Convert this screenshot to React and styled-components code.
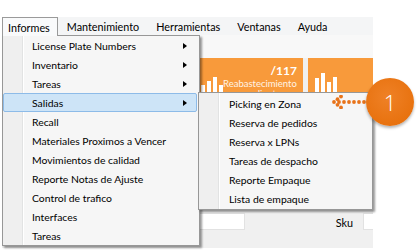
import React from "react";
import styled, { createGlobalStyle } from "styled-components";

const GlobalStyle = createGlobalStyle`
  html, body { margin: 0; padding: 0; background: #ffffff; }
  body { font-family: Lato, "Liberation Sans", Arial, sans-serif; }
  * { box-sizing: border-box; }
`;

const Page = styled.div`
  position: relative;
  width: 418px;
  height: 251px;
  padding: 17px 0 0 2px;
  overflow: hidden;
`;

const Window = styled.div`
  width: 371px;
  height: 231px;
  background: #f0f0f0;
  display: flex;
  flex-direction: column;
  overflow: hidden;
`;

const MenuBar = styled.div`
  height: 18px;
  display: flex;
  align-items: stretch;
  gap: 3px;
  background: #f4f5f6;
  font-size: 10.8px;
  color: #000;
`;

const MenuTitle = styled.div`
  display: flex;
  align-items: center;
  padding: 0 7px 0 5px;
  border: 1px solid ${(p) => (p.$active ? "#9a9a9a" : "transparent")};
  border-bottom: none;
  background: ${(p) => (p.$active ? "#f9fafb" : "transparent")};
  position: relative;
  z-index: 3;
  height: ${(p) => (p.$active ? "19px" : "18px")};
`;

const Toolbar = styled.div`
  height: 23px;
  background: #f8f8f8;
`;

const TileRow = styled.div`
  height: 34px;
  display: flex;
  gap: 5px;
  padding-left: 78px;
  overflow: hidden;
`;

const Tile = styled.div`
  flex: 0 0 109px;
  height: 34px;
  background: #f89a3b;
  display: flex;
  align-items: flex-end;
  justify-content: space-between;
  padding: 0 7px;
  color: #fff;
  overflow: hidden;
`;

const Bars = styled.div`
  display: flex;
  align-items: flex-end;
  gap: 2px;
  height: 100%;
`;

const Bar = styled.div`
  width: 4px;
  background: #ffffff;
`;

const TileText = styled.div`
  align-self: flex-start;
  display: flex;
  flex-direction: column;
  align-items: flex-end;
  padding-top: 7px;
  line-height: 10px;
`;

const TileValue = styled.div`
  font-size: 12px;
  font-weight: 700;
  line-height: 12px;
`;

const TileLabel = styled.div`
  font-size: 9.5px;
  line-height: 10px;
  color: #fff3e6;
  text-align: center;
  margin-top: 2px;
`;

const Content = styled.div`
  flex: 1;
  background: #f9f9f9;
`;

const FilterRow = styled.div`
  height: 38px;
  display: flex;
  align-items: flex-start;
  padding: 3px 0 0 100px;
  background: #f0f0f0;
`;

const Input = styled.div`
  flex: 0 0 ${(p) => p.$w}px;
  height: 17px;
  margin-right: ${(p) => p.$overflow || 0}px;
  background: #fff;
  border: 1px solid #e2e2e2;
`;

const Label = styled.div`
  flex: 1;
  text-align: right;
  padding: 3px 10px 0 0;
  font-size: 10.8px;
  color: #000;
`;

const Menu = styled.div`
  position: absolute;
  left: ${(p) => p.$x}px;
  top: ${(p) => p.$y}px;
  width: ${(p) => p.$w}px;
  padding: ${(p) => p.$pad}px 0;
  border: 1px solid #979797;
  background: linear-gradient(
    to right,
    #efefef 0 19px,
    #e2e3e3 19px 20px,
    #ffffff 20px 21px,
    #f6f6f6 21px
  );
  box-shadow: 2px 2px 2px rgba(0, 0, 0, 0.4);
  font-size: 10.4px;
  color: #000;
  z-index: 2;
`;

const Item = styled.div`
  height: 19px;
  display: flex;
  align-items: center;
  margin-right: 2px;
  padding: 0 9px 0 ${(p) => p.$indent}px;
  border: 1px solid ${(p) => (p.$hot ? "#8dbbe8" : "transparent")};
  border-radius: 2px;
  background: ${(p) => (p.$hot ? "#cde4f7" : "transparent")};
  white-space: nowrap;
`;

const SubArrow = styled.span`
  margin-left: auto;
  width: 0;
  height: 0;
  border-top: 3.5px solid transparent;
  border-bottom: 3.5px solid transparent;
  border-left: 4px solid #000;
`;

const Callout = styled.div`
  position: absolute;
  left: 331px;
  top: 78px;
  display: flex;
  align-items: center;
  z-index: 4;
`;

const Circle = styled.div`
  width: 48px;
  height: 48px;
  border-radius: 50%;
  background: radial-gradient(circle at 45% 40%, #ef8126 0%, #e8720f 70%, #d9680f 100%);
  box-shadow: 0 2px 3px rgba(0, 0, 0, 0.3);
  color: #fff;
  display: flex;
  align-items: center;
  justify-content: center;
  font-family: "Open Sans", Lato, sans-serif;
  font-size: 22px;
  font-weight: 300;
  margin-left: -1px;
`;

const mainItems = [
  ["License Plate Numbers", true],
  ["Inventario", true],
  ["Tareas", true],
  ["Salidas", true, true],
  ["Recall"],
  ["Materiales Proximos a Vencer"],
  ["Movimientos de calidad"],
  ["Reporte Notas de Ajuste"],
  ["Control de trafico"],
  ["Interfaces"],
  ["Tareas"],
];

const subItems = [
  "Picking en Zona",
  "Reserva de pedidos",
  "Reserva x LPNs",
  "Tareas de despacho",
  "Reporte Empaque",
  "Lista de empaque",
];

const tiles = [
  { bars: [9, 13, 15, 8], value: "", label: "" },
  { bars: [7, 11, 15, 7], value: "/117", label: "Reabastecimiento", sub: "pendiente" },
  { bars: [14, 19, 10, 15], value: "", label: "" },
];

function ArrowDots() {
  const c = "#e8731a";
  const dots = [
    [341, 96.5], [337.5, 99.2], [334, 102], [337.5, 104.8], [341, 107.5],
    [339, 102], [344, 102], [349, 102], [354, 102], [359, 102], [364, 102],
  ];
  return (
    <svg width="36" height="14" viewBox="331 95 36 14">
      {dots.map(([x, y], i) => (
        <circle key={i} cx={x} cy={y} r="1.9" fill={c} />
      ))}
    </svg>
  );
}

export default function App() {
  return (
    <>
      <GlobalStyle />
      <Page>
        <Window>
          <MenuBar>
            <MenuTitle $active>Informes</MenuTitle>
            <MenuTitle>Mantenimiento</MenuTitle>
            <MenuTitle>Herramientas</MenuTitle>
            <MenuTitle>Ventanas</MenuTitle>
            <MenuTitle>Ayuda</MenuTitle>
          </MenuBar>
          <Toolbar />
          <TileRow>
            {tiles.map((t, i) => (
              <Tile key={i}>
                <Bars>
                  {t.bars.map((h, j) => (
                    <Bar key={j} style={{ height: h }} />
                  ))}
                </Bars>
                <TileText>
                  <TileValue>{t.value}</TileValue>
                  <TileLabel>
                    {t.label}
                    <br />
                    {t.sub}
                  </TileLabel>
                </TileText>
              </Tile>
            ))}
          </TileRow>
          <Content />
          <FilterRow>
            <Input $w={143} />
            <Label>Sku</Label>
            <Input $w={40} $overflow={-30} />
          </FilterRow>
        </Window>

        <Menu $x={2} $y={35} $w={198} $pad={0}>
          {mainItems.map(([t, arrow, hot], i) => (
            <Item key={i} $indent={28} $hot={hot}>
              {t}
              {arrow && <SubArrow />}
            </Item>
          ))}
        </Menu>

        <Menu $x={198} $y={92} $w={175} $pad={1}>
          {subItems.map((t, i) => (
            <Item key={i} $indent={29}>
              {t}
            </Item>
          ))}
        </Menu>

        <Callout>
          <ArrowDots />
          <Circle>1</Circle>
        </Callout>
      </Page>
    </>
  );
}
